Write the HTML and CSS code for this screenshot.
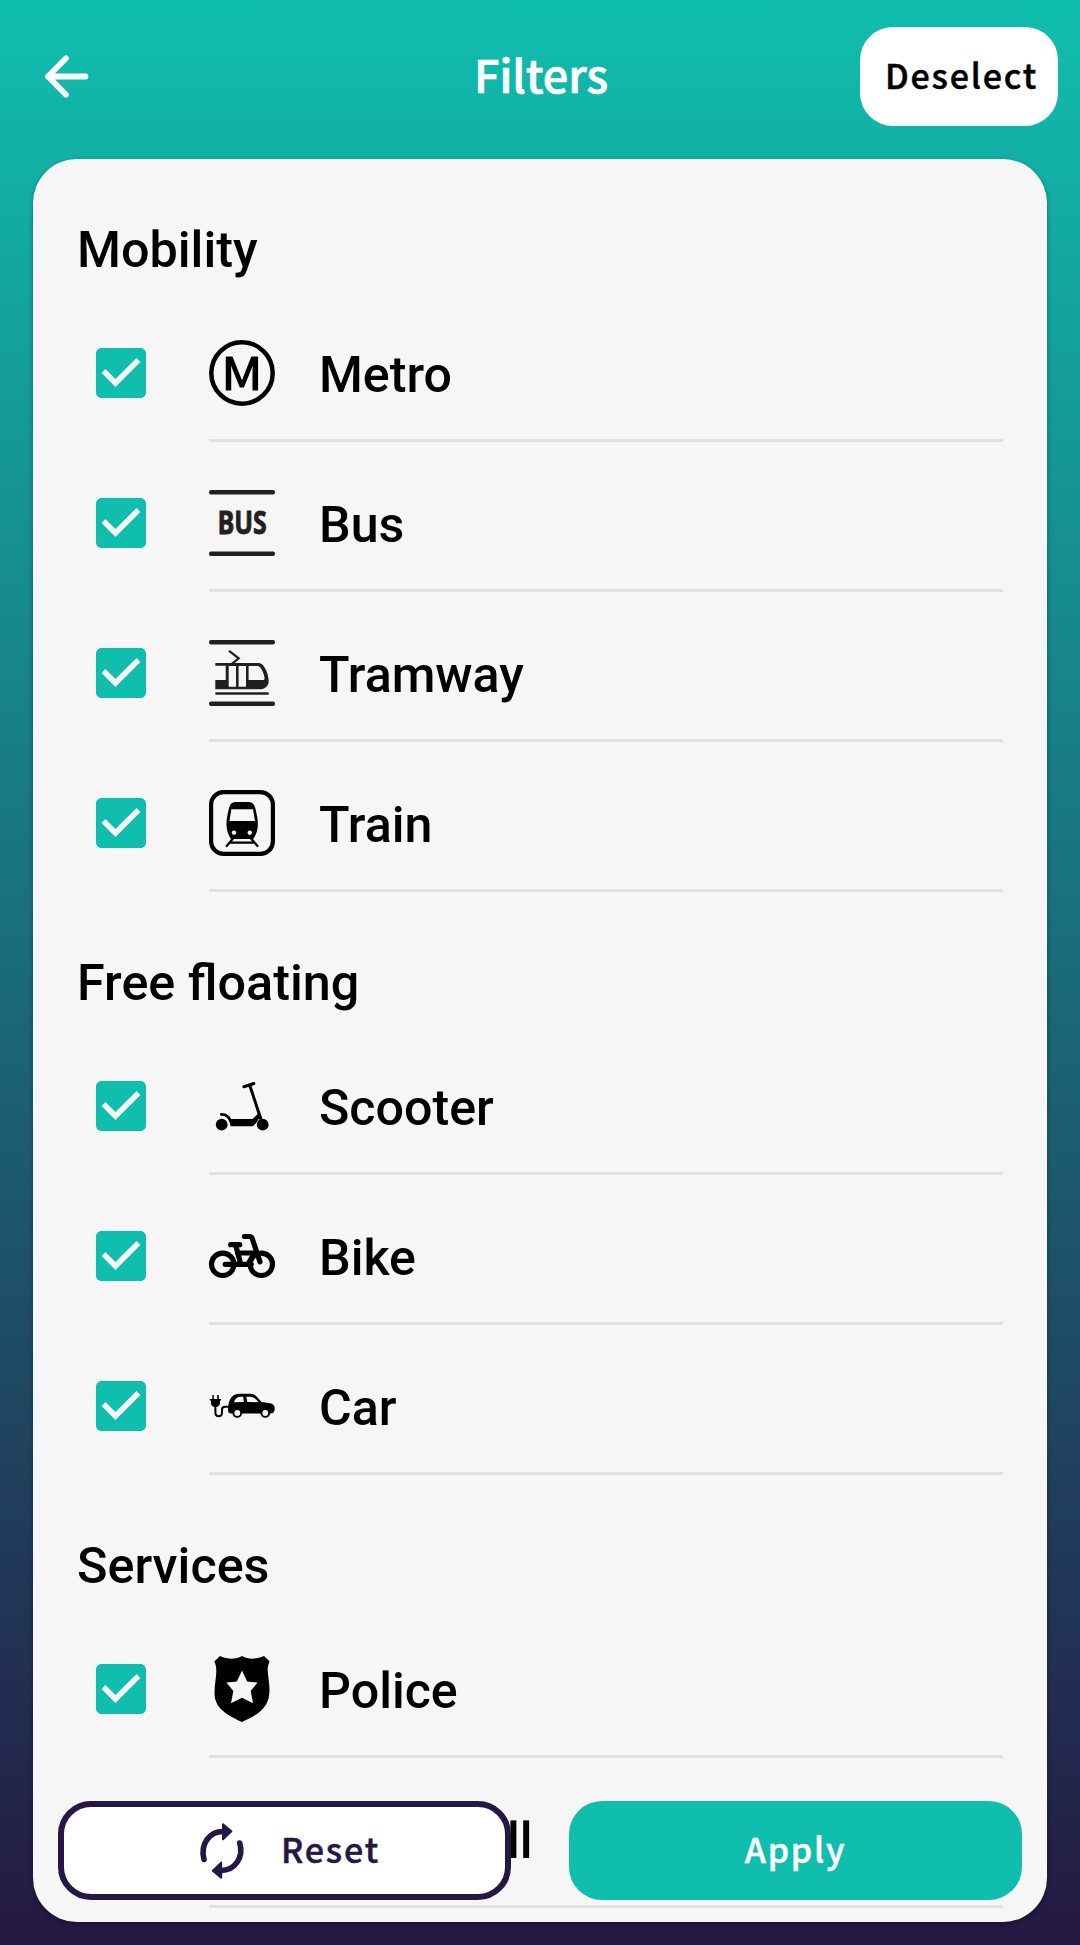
FILE: index.html
```html
<!DOCTYPE html>
<html lang="en">
<head>
<meta charset="utf-8">
<title>Filters</title>
<link rel="stylesheet" href="styles.css">
</head>
<body>
<svg class="defs" width="0" height="0" aria-hidden="true">
  <symbol id="check" viewBox="3 3 18 18">
    <path d="M19 3H5c-1.11 0-2 .9-2 2v14c0 1.1.89 2 2 2h14c1.11 0 2-.9 2-2V5c0-1.1-.89-2-2-2zm-9 14l-5-5 1.41-1.41L10 14.17l7.59-7.59L19 8l-9 9z"/>
  </symbol>
</svg>
<header class="header">
  <a class="back" aria-label="Back">
    <svg viewBox="0 0 44 44" width="44" height="44"><path d="M40.500 21.500H3M21 3.300L3 21.500l18 18.200"/></svg>
  </a>
  <h1 class="title">Filters</h1>
  <button class="btn btn-deselect">Deselect</button>
</header>
<main class="card">
  <section>
    <h2 class="heading">Mobility</h2>
    <ul class="list">
      <li class="row">
        <svg class="box"><use href="#check"/></svg>
        <div class="entry">
          <svg class="icon" viewBox="0 0 66 66">
            <circle cx="33" cy="33" r="30.700" fill="none" stroke="#000" stroke-width="4.500"/>
            <text class="metro-letter" transform="translate(33 49.600) scale(1.120 1)" text-anchor="middle">M</text>
          </svg>
          <span class="label">Metro</span>
        </div>
      </li>
      <li class="row">
        <svg class="box"><use href="#check"/></svg>
        <div class="entry">
          <svg class="icon ink" viewBox="0 0 66 66">
            <rect width="66" height="4.500" rx="2"/><rect y="61.500" width="66" height="4.500" rx="2"/>
            <text class="bus-word" x="8.700" y="44" textLength="49" lengthAdjust="spacingAndGlyphs">BUS</text>
          </svg>
          <span class="label">Bus</span>
        </div>
      </li>
      <li class="row">
        <svg class="box"><use href="#check"/></svg>
        <div class="entry">
          <svg class="icon ink" viewBox="0 0 66 66">
            <rect width="66" height="4.500" rx="2"/><rect y="61.500" width="66" height="4.500" rx="2"/>
            <path d="M20.700 11.300l9 7-7.500 6" fill="none" stroke="#231f20" stroke-width="2.200" stroke-linecap="round"/>
            <path fill-rule="evenodd" d="M6.300 23H50c5 0 9.700 11 9.700 18.500 0 4.500-4 7.800-8.700 7.800H6.300V40h10.400V25.700H6.300zM19.700 26v20.800H27V26zM29.600 26v20.800H37V26zM39.600 26v14h13.600c2 0 2.600-.7 2.300-2.300C54.600 32 51.500 26 48.500 26z"/>
            <rect x="6.300" y="52.200" width="53.400" height="2.600" rx=".5"/>
          </svg>
          <span class="label">Tramway</span>
        </div>
      </li>
      <li class="row">
        <svg class="box"><use href="#check"/></svg>
        <div class="entry">
          <svg class="icon" viewBox="0 0 66 66">
            <rect x="2.100" y="2.100" width="61.800" height="61.800" rx="12.500" fill="none" stroke="#000" stroke-width="4.200"/>
            <path fill-rule="evenodd" d="M26.500 12h13c4.500 0 6 3 7 7 1.500 6 2.300 10 2.300 15 0 7-2 11-4.500 15H22c-2.500-4-4.500-8-4.500-15 0-5 .8-9 2.300-15 1-4 2.500-7 6.700-7zM22.300 19.300L20.500 31H46l-2-11.700zM25 40.500a2.200 2.200 0 1 0 .01 0zM40.800 40.500a2.200 2.200 0 1 0 .01 0z"/>
            <path d="M24 48.500L17.700 56M42 48.500l6.500 7.500M21 52.700h24" fill="none" stroke="#000" stroke-width="2.200" stroke-linecap="round"/>
          </svg>
          <span class="label">Train</span>
        </div>
      </li>
    </ul>
  </section>
  <section>
    <h2 class="heading">Free floating</h2>
    <ul class="list">
      <li class="row">
        <svg class="box"><use href="#check"/></svg>
        <div class="entry">
          <svg class="icon" viewBox="0 0 66 66">
            <circle cx="12.700" cy="51.700" r="5.900"/><circle cx="53.700" cy="51.700" r="5.900"/>
            <path d="M12.400 41.400c4 0 7.600 2 9.100 6.600" fill="none" stroke="#000" stroke-width="2.900" stroke-linecap="round"/>
            <path d="M34.900 13.700l9.900-3.200M40.800 12.500L52.500 48" fill="none" stroke="#000" stroke-width="3" stroke-linecap="round"/>
            <path d="M20 46h23.500l6.500-6 3 4c-3 1-4 2.500-4.600 4.500L44 53.300H21.500z"/>
          </svg>
          <span class="label">Scooter</span>
        </div>
      </li>
      <li class="row">
        <svg class="box"><use href="#check"/></svg>
        <div class="entry">
          <svg class="icon" viewBox="0 0 66 66">
            <g fill="none" stroke="#000" stroke-width="5.200" stroke-linecap="round" stroke-linejoin="round">
              <circle cx="13.700" cy="41.300" r="11.200"/><circle cx="52.300" cy="41.300" r="11.200"/>
              <path d="M21.700 21.700h9M26.800 22.500l5 18.800M16.200 41.300h26M28.500 30h17l-6 10"/>
              <path d="M35.500 13.500h5q2 0 2.700 2L51 38.800"/>
            </g>
          </svg>
          <span class="label">Bike</span>
        </div>
      </li>
      <li class="row">
        <svg class="box"><use href="#check"/></svg>
        <div class="entry">
          <svg class="icon" viewBox="0 0 66 66">
            <path d="M3.300 22h1.500v4h3.400v-4h1.600v4H12v1.600h-1V30c0 2-1.500 3.500-3.700 4H5.400C3.200 33.500 2 32 2 30v-2.400H.7V26h2.600z"/>
            <path d="M6.400 33v6.500c0 5 6.600 5 6.600 0V37c0-2 1.300-3.200 3-3.200h4" fill="none" stroke="#000" stroke-width="2"/>
            <path fill-rule="evenodd" d="M19.300 33c.5-4.500 2.200-8.500 5-10.500 2-1.500 5-1.800 8-1.800h8.500c4 0 5.500 1.500 7.500 3.500l4.200 4.800 8.500 1.300c3.500.6 5 2.500 4.700 5.500-.2 3-1.200 4.700-4 4.700H22c-2.200 0-3-1.500-3-4zM25 29.300l9.800-.3-.6-5.200c-5-.2-7.500.7-9.200 5.500zM37.300 23.800l1 5.200 11.400.2c-3-3.400-5.500-5.400-8.200-5.400z"/>
            <circle cx="28.300" cy="40" r="3.900" fill="#f6f6f6" stroke="#000" stroke-width="1.900"/>
            <circle cx="56.300" cy="40" r="3.900" fill="#f6f6f6" stroke="#000" stroke-width="1.900"/>
          </svg>
          <span class="label">Car</span>
        </div>
      </li>
    </ul>
  </section>
  <section>
    <h2 class="heading">Services</h2>
    <ul class="list">
      <li class="row">
        <svg class="box"><use href="#check"/></svg>
        <div class="entry">
          <svg class="icon" viewBox="0 0 66 66">
            <path fill-rule="evenodd" d="M11 0c8 3.500 15.500 3.500 22 0 6.500 3.500 14 3.500 22 0l5.700 5.600c-4.400 8-.2 16-.2 28.400C60.500 50 52 57.500 33 66 14 57.500 5.500 50 5.500 37c0-12.400 4.200-23-.2-31.400zM33 14.600l-5.200 10.800-10.400 1.200 6.900 8.400L22 47.300l11-5.500 11 5.500L41.700 35l6.900-8.400-10.400-1.200z"/>
          </svg>
          <span class="label">Police</span>
        </div>
      </li>
      <li class="row">
        <svg class="box"><use href="#check"/></svg>
        <div class="entry">
          <svg class="icon" viewBox="0 0 66 66"><path d="M33 6l24 13v5H9v-5zM13 28h7v20h-7zM29.500 28h7v20h-7zM46 28h7v20h-7zM9 52h48v7H9z"/></svg>
          <span class="label">Town hall</span>
        </div>
      </li>
    </ul>
  </section>
</main>
<footer class="actions">
  <button class="btn btn-reset">
    <svg viewBox="0 0 66 66" width="66" height="66">
      <path d="M15 41.500C11 26 20.500 13.500 34 13.500M50.700 25C55 39 46 52.500 32 52.500" fill="none" stroke="#251843" stroke-width="5.600" stroke-linecap="round"/>
      <path d="M34 6.200l8.400 7.100L34 21.400zM32.200 44.600v15.200l-8.400-7.100z" fill="#251843" stroke="#251843" stroke-width="2" stroke-linejoin="round"/>
    </svg>
    <span class="btn-text">Reset</span>
  </button>
  <button class="btn btn-apply"><span class="btn-text">Apply</span></button>
</footer>
</body>
</html>
```
FILE: styles.css
```css
* { box-sizing: border-box; }
body {
  margin: 0;
  height: 1945px;
  overflow: hidden;
  font-family: Roboto, sans-serif;
  color: #000;
  background: linear-gradient(#10beae, #251843);
}
.defs { display: block; }
.header {
  display: grid;
  grid-template-columns: 1fr auto 1fr;
  align-items: center;
  height: 159px;
  padding: 27px 22px 33px;
}
.back { padding-left: 23px; height: 44px; }
.back svg { display: block; fill: none; stroke: #fff; stroke-width: 5.800px; stroke-linecap: round; stroke-linejoin: round; }
.title {
  margin: 0;
  padding: 0 0 5px 2px;
  font: 500 45px/60px "Noto Sans CJK JP", sans-serif;
  -webkit-text-stroke: .7px currentColor;
  color: #fff;
}
.btn {
  display: flex;
  align-items: center;
  justify-content: center;
  height: 99px;
  padding: 0;
  border: 0;
  border-radius: 33px;
  font: 500 34px/50px "Noto Sans CJK JP", sans-serif;
  letter-spacing: 1.800px;
  -webkit-text-stroke: .5px currentColor;
}
.btn-text { padding-bottom: 3px; }
.btn-deselect { justify-self: end; width: 198px; padding: 0 0 3px 5px; background: #fff; color: #000; }
.card {
  height: 1763px;
  margin: 0 33px;
  padding: 0 44px;
  overflow: hidden;
  border-radius: 44px;
  background: #f6f6f6;
  box-shadow: 0 2px 5px rgba(0, 0, 0, .35);
}
.heading {
  height: 133px;
  margin: 0;
  padding-top: 61px;
  font-size: 50.300px;
  font-weight: 500;
  line-height: 60px;
}
.list { margin: 0; padding: 0; list-style: none; }
.row { display: flex; height: 150px; padding-left: 19px; }
.box { width: 50px; height: 50px; margin: 56px 63px 0 0; fill: #10beae; }
.entry {
  display: flex;
  flex: 1;
  align-items: center;
  gap: 44px;
  padding-top: 15px;
  border-bottom: 3px solid #e0e0e0;
}
.icon { width: 66px; height: 66px; overflow: visible; }
.ink { fill: #231f20; }
.metro-letter { font: 400 45.500px "Noto Sans CJK JP", sans-serif; stroke: #000; stroke-width: 1.100px; stroke-linejoin: round; }
.bus-word { font: 700 31.500px "Noto Sans", sans-serif; stroke: #231f20; stroke-width: .9px; stroke-linejoin: round; }
.label { font-size: 50.150px; font-weight: 500; line-height: 60px; padding-top: 3px; }
.actions {
  position: absolute;
  left: 58px;
  top: 1801px;
  display: grid;
  grid-template-columns: 453px 453px;
  gap: 58px;
}
.btn-reset { gap: 26px; border: 6px solid #251843; background: #fff; color: #251843; }
.btn-apply { background: #10beae; color: #fff; }
```
